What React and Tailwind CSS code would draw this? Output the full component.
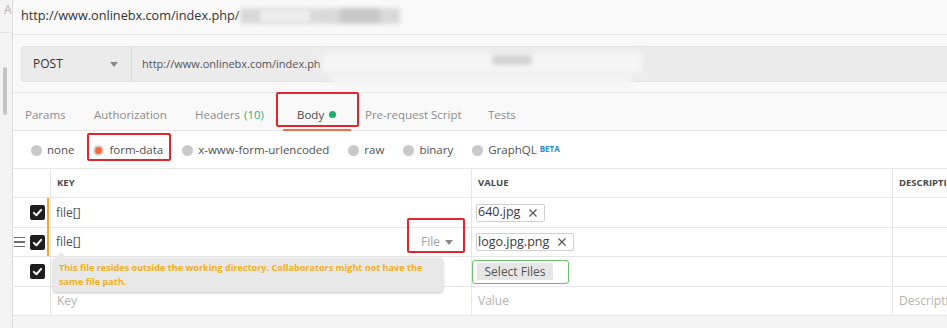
import React from "react";

function Check() {
  return (
    <div className="w-[15px] h-[15px] rounded-[2px] bg-[#1e1e1e] flex items-center justify-center shrink-0">
      <svg width="11" height="11" viewBox="0 0 12 12">
        <path d="M2 6.4 L4.8 9 L10 3.2" fill="none" stroke="#fff" strokeWidth="2.2" strokeLinecap="round" strokeLinejoin="round" />
      </svg>
    </div>
  );
}

function Hamburger() {
  return (
    <div className="w-[11px] flex flex-col gap-[3px] shrink-0">
      <div className="h-[1.5px] bg-[#6e6e6e]" />
      <div className="h-[1.5px] bg-[#6e6e6e]" />
      <div className="h-[1.5px] bg-[#6e6e6e]" />
    </div>
  );
}

function Radio({ selected }) {
  if (selected) {
    return (
      <div className="w-[11px] h-[11px] rounded-full bg-[#d6d6d6] flex items-center justify-center shrink-0">
        <div className="w-[7px] h-[7px] rounded-full bg-[#f26b3a]" />
      </div>
    );
  }
  return <div className="w-[11px] h-[11px] rounded-full bg-[#c9c9c9] shrink-0" />;
}

function Cross() {
  return (
    <svg width="10" height="10" viewBox="0 0 10 10" className="shrink-0">
      <path d="M1.5 1.5 L8.5 8.5 M8.5 1.5 L1.5 8.5" stroke="#555" strokeWidth="1.2" />
    </svg>
  );
}

function Chip({ name }) {
  return (
    <div className="h-[18px] border border-[#cfcfcf] rounded-[2px] bg-white flex items-center pl-[1px] pr-[6px] text-[12.5px] text-[#3a3a3a]">
      <span className="leading-none">{name}</span>
      <span className="ml-[8px] flex"><Cross /></span>
    </div>
  );
}

function Caret({ color = "#888" }) {
  return (
    <svg width="8" height="5" viewBox="0 0 8 5" className="shrink-0">
      <path d="M0 0 L8 0 L4 5 Z" fill={color} />
    </svg>
  );
}

export default function App() {
  const tabs = [
    { label: "Params", w: "w-[67px]", pl: "pl-[12px]" },
    { label: "Authorization", w: "w-[101px]", pl: "pl-[14px]" },
    { label: "Headers", w: "w-[102px]", pl: "pl-[14px]", count: "(10)" },
    { label: "Body", w: "w-[68px]", pl: "pl-[14px]", active: true },
    { label: "Pre-request Script", w: "w-[123px]", pl: "pl-[14px]" },
    { label: "Tests", w: "w-[80px]", pl: "pl-[14px]" },
  ];
  const radios = [
    { label: "none" },
    { label: "form-data", selected: true },
    { label: "x-www-form-urlencoded" },
    { label: "raw" },
    { label: "binary" },
    { label: "GraphQL", beta: true },
  ];

  return (
    <div className="relative w-[947px] h-[328px] overflow-hidden flex bg-white font-['Open_Sans',_sans-serif]">
      {/* left strip */}
      <div className="w-[13px] shrink-0 bg-[#f3f3f3] border-r border-[#dcdcdc] flex flex-col">
        <div className="h-[33px] border-b border-[#e4e4e4] text-[12px] leading-none text-[#b4b4b4] pl-[4px] pt-[4px] overflow-hidden">
          A
        </div>
        <div className="mt-[34px] ml-[3px] w-[4px] h-[48px] rounded-full bg-[#c4c4c4]" />
      </div>

      {/* main */}
      <div className="flex-1 min-w-0 flex flex-col">
        {/* title */}
        <div className="h-[35px] shrink-0 bg-[#f9f9f9] border-b border-[#e6e6e6] pl-[8px] pb-[3px] flex items-center text-[12.7px] text-[#333] whitespace-nowrap">
          <span>http://www.onlinebx.com/index.php/</span>
          <div className="relative w-[160px] h-[16px] ml-[1px]">
            <div className="absolute inset-0 bg-[#dadada] blur-[2px]" />
            <div className="absolute left-[20px] top-[2px] w-[50px] h-[12px] bg-[#eeeeee] blur-[2px]" />
            <div className="absolute left-[100px] top-[1px] w-[40px] h-[13px] bg-[#c8c8c8] blur-[2px]" />
          </div>
        </div>

        {/* url row */}
        <div className="h-[58px] shrink-0 bg-[#f9f9f9] border-b border-[#e6e6e6] pl-[8px] pt-[11px]">
          <div className="h-[36px] flex bg-[#ebebeb] rounded-l-[3px] border-y border-l border-[#e2e2e2]">
            <div className="w-[110px] shrink-0 border-r border-[#d9d9d9] flex items-center justify-between pl-[11px] pr-[13px] text-[12px] text-[#333]">
              <span>POST</span>
              <Caret color="#8a8a8a" />
            </div>
            <div className="relative flex-1 flex items-center pl-[10px] text-[11px] text-[#555] whitespace-nowrap">
              <span>http://www.onlinebx.com/index.ph</span>
              <div className="absolute left-[190px] top-[6px] w-[320px] h-[20px] bg-[#f6f6f6] blur-[3px]" />
              <div className="absolute left-[200px] top-[28px] w-[300px] h-[12px] bg-[#f4f4f4] blur-[3px]" />
              <div className="absolute left-[360px] top-[8px] w-[40px] h-[10px] bg-[#d4d4d4] blur-[2px]" />
            </div>
          </div>
        </div>

        {/* tabs */}
        <div className="h-[38px] shrink-0 bg-[#f9f9f9] border-b border-[#e4e4e4] flex text-[11.5px] whitespace-nowrap">
          {tabs.map((t) => (
            <div key={t.label} className={`relative ${t.w} ${t.pl} shrink-0 flex items-center pt-[6px]`}>
              <span className={t.active ? "text-[#4a4a4a]" : "text-[#8c8c8c]"}>{t.label}</span>
              {t.count && <span className="ml-[4px] text-[#2fae84]">{t.count}</span>}
              {t.active && <div className="ml-[5px] w-[7px] h-[7px] rounded-full bg-[#1fae6d]" />}
              {t.active && <div className="absolute left-0 right-0 bottom-[-1px] h-[2px] bg-[#f0713f]" />}
            </div>
          ))}
        </div>

        {/* radios */}
        <div className="h-[38px] shrink-0 bg-white border-b border-[#e6e6e6] flex items-center pl-[18px] pt-[1px] gap-[19px] text-[11.5px] text-[#505050] whitespace-nowrap">
          {radios.map((r) => (
            <div key={r.label} className="flex items-center gap-[5px]">
              <Radio selected={r.selected} />
              <span>
                {r.label}
                {r.beta && <sup className="ml-[3px] text-[8px] font-bold text-[#2b86d8] relative top-[-2px]">BETA</sup>}
              </span>
            </div>
          ))}
        </div>

        {/* table */}
        <div className="shrink-0 bg-white flex flex-col text-[12px] text-[#505050]">
          {/* header */}
          <div className="h-[29px] flex border-b border-[#e6e6e6]">
            <div className="w-[37px] shrink-0" />
            <div className="w-[421px] shrink-0 border-l border-[#e6e6e6] pl-[6px] flex items-center text-[9.5px] font-bold text-[#4a4a4a]">KEY</div>
            <div className="w-[421px] shrink-0 border-l border-[#e6e6e6] pl-[6px] flex items-center text-[9.5px] font-bold text-[#4a4a4a]">VALUE</div>
            <div className="flex-1 border-l border-[#e6e6e6] pl-[6px] flex items-center text-[9.5px] font-bold text-[#4a4a4a] whitespace-nowrap overflow-hidden">DESCRIPTION</div>
          </div>

          {/* row 1 */}
          <div className="h-[30px] flex border-b border-[#e6e6e6]">
            <div className="w-[37px] shrink-0 flex items-center">
              <div className="w-[11px] ml-[1px]" />
              <div className="ml-[5px]"><Check /></div>
              <div className="ml-[2px] w-[2px] self-stretch -mb-px relative z-10 bg-[#f0a830]" />
            </div>
            <div className="w-[421px] shrink-0 border-l border-[#e6e6e6] pl-[5px] flex items-center">file[]</div>
            <div className="w-[421px] shrink-0 border-l border-[#e6e6e6] pl-[4px] flex items-center">
              <Chip name="640.jpg" />
            </div>
            <div className="flex-1 border-l border-[#e6e6e6]" />
          </div>

          {/* row 2 */}
          <div className="relative h-[29px] flex border-b border-[#e6e6e6]">
            <div className="w-[37px] shrink-0 flex items-center">
              <div className="ml-[1px]"><Hamburger /></div>
              <div className="ml-[5px]"><Check /></div>
              <div className="ml-[2px] w-[2px] self-stretch relative z-10 bg-[#f0a830]" />
            </div>
            <div className="w-[421px] shrink-0 border-l border-[#e6e6e6] pl-[5px] pr-[18px] flex items-center justify-between">
              <span>file[]</span>
              <span className="flex items-center gap-[5px] text-[#a3a3a3]">
                File <Caret color="#8a8a8a" />
              </span>
            </div>
            <div className="w-[421px] shrink-0 border-l border-[#e6e6e6] pl-[4px] flex items-center">
              <Chip name="logo.jpg.png" />
            </div>
            <div className="flex-1 border-l border-[#e6e6e6]" />
          </div>

          {/* row 3 */}
          <div className="relative h-[30px] flex border-b border-[#e6e6e6]">
            <div className="w-[37px] shrink-0 flex items-center">
              <div className="w-[11px] ml-[1px]" />
              <div className="ml-[5px]"><Check /></div>
            </div>
            <div className="w-[421px] shrink-0 border-l border-[#e6e6e6]" />
            <div className="w-[421px] shrink-0 border-l border-[#e6e6e6] flex items-center">
              <div className="w-[97px] h-[24px] border border-[#6cbf6a] rounded-[3px] flex items-center pl-[4px]">
                <div className="w-[76px] h-[17px] bg-[#e6e6e6] flex items-center justify-center text-[12px] text-[#555]">
                  Select Files
                </div>
              </div>
            </div>
            <div className="flex-1 border-l border-[#e6e6e6]" />

            {/* tooltip */}
            <div className="absolute left-[40px] top-[1px] w-[390px] h-[34px] z-20 rounded-[4px] bg-[#e8e8e8] shadow-[0_1px_3px_rgba(0,0,0,0.25)] pl-[6px] pt-[3px] text-[9.1px] leading-[14px] font-bold text-[#f2b01e] whitespace-nowrap">
              <div className="absolute left-[4px] top-[-4px] w-[8px] h-[8px] bg-[#e8e8e8] rotate-45" />
              <div className="relative">This file resides outside the working directory. Collaborators might not have the</div>
              <div className="relative">same file path.</div>
            </div>
          </div>

          {/* row 4 */}
          <div className="h-[29px] flex border-b border-[#e6e6e6] text-[#b3b3b3]">
            <div className="w-[37px] shrink-0" />
            <div className="w-[421px] shrink-0 border-l border-[#e6e6e6] pl-[6px] flex items-center">Key</div>
            <div className="w-[421px] shrink-0 border-l border-[#e6e6e6] pl-[6px] flex items-center">Value</div>
            <div className="flex-1 border-l border-[#e6e6e6] pl-[6px] flex items-center whitespace-nowrap overflow-hidden">Description</div>
          </div>
        </div>

        <div className="flex-1 bg-[#f4f4f4]" />
      </div>

      {/* red annotation boxes */}
      <div className="absolute left-[276px] top-[92px] w-[83px] h-[35px] border-2 border-[#e3262b] rounded-[2px] pointer-events-none" />
      <div className="absolute left-[87px] top-[133px] w-[84px] h-[28px] border-2 border-[#e3262b] rounded-[2px] pointer-events-none" />
      <div className="absolute left-[407px] top-[218px] w-[58px] h-[35px] border-2 border-[#e3262b] rounded-[2px] pointer-events-none" />
    </div>
  );
}
